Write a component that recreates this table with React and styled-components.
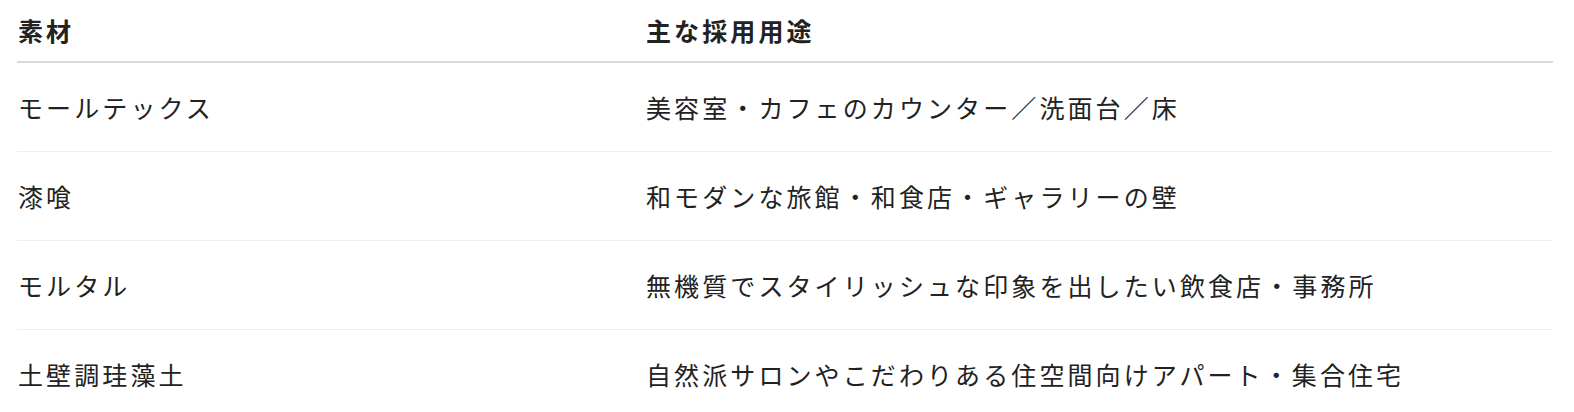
import React from 'react'
import styled, { createGlobalStyle } from 'styled-components'

const GlobalStyle = createGlobalStyle`
  html, body {
    margin: 0;
    padding: 0;
    background: #ffffff;
  }
  body {
    font-family: "Noto Sans CJK JP", "Noto Sans", sans-serif;
    color: #222222;
  }
`;

const Wrapper = styled.div`
  padding: 0 21px 0 17px;
`;

const Table = styled.div`
  display: flex;
  flex-direction: column;
  width: 1536px;
`;

const Row = styled.div`
  display: grid;
  grid-template-columns: 629px 1fr;
  align-items: center;
  height: ${props => props.head ? '61px' : '88px'};
  border-bottom: ${props => props.head ? '2px solid #d9d9d9' : '1px solid #efefef'};
`;

const Cell = styled.div`
  font-size: 25px;
  letter-spacing: 3.1px;
  line-height: 1.4;
  font-weight: ${props => props.head ? 700 : 400};
  padding-left: ${props => props.second ? '0' : '1px'};
  white-space: nowrap;
`;

const rows = [
    ['モールテックス', '美容室・カフェのカウンター／洗面台／床'],
    ['漆喰', '和モダンな旅館・和食店・ギャラリーの壁'],
    ['モルタル', '無機質でスタイリッシュな印象を出したい飲食店・事務所'],
    ['土壁調珪藻土', '自然派サロンやこだわりある住空間向けアパート・集合住宅'],
];

const App = () => {
    return (
        <Wrapper>
            <GlobalStyle />
            <Table>
                <Row head>
                    <Cell head>素材</Cell>
                    <Cell head second>主な採用用途</Cell>
                </Row>
                {rows.map(([material, use]) => (
                    <Row key={material}>
                        <Cell>{material}</Cell>
                        <Cell second>{use}</Cell>
                    </Row>
                ))}
            </Table>
        </Wrapper>
    );
};

export default App;
